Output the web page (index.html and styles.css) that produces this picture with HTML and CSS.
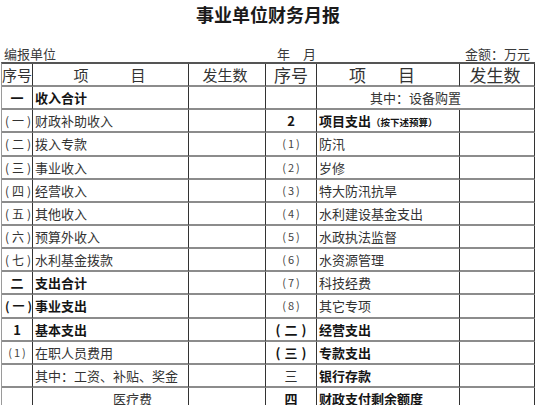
FILE: index.html
```html
<!DOCTYPE html>
<html lang="zh-CN">
<head>
<meta charset="utf-8">
<title>事业单位财务月报</title>
<link rel="stylesheet" href="styles.css">
</head>
<body>
<h1 class="title">事业单位财务月报</h1>
<div class="info">
  <span class="unit">编报单位</span>
  <span class="date">年　月</span>
  <span class="money">金额：万元</span>
</div>
<div class="sheet">
  <div class="c hd seq-l">序号</div>
  <div class="c hd item-h"><span>项</span><span>目</span></div>
  <div class="c hd amt-h">发生数</div>
  <div class="c hd hd-r seq-h">序号</div>
  <div class="c hd hd-r item-h item-hr"><span>项</span><span>目</span></div>
  <div class="c hd hd-r amt-h">发生数</div>

  <div class="c seq b">一</div>
  <div class="c item b">收入合计</div>
  <div class="c"></div>
  <div class="c seq"></div>
  <div class="c item span2 sub-r">其中：设备购置</div>

  <div class="c seq pl">(一)</div>
  <div class="c item">财政补助收入</div>
  <div class="c"></div>
  <div class="c seq b">2</div>
  <div class="c item b">项目支出<span class="note">（按下述预算）</span></div>
  <div class="c"></div>

  <div class="c seq pl">(二)</div>
  <div class="c item">拨入专款</div>
  <div class="c"></div>
  <div class="c seq num">(1)</div>
  <div class="c item">防汛</div>
  <div class="c"></div>

  <div class="c seq pl">(三)</div>
  <div class="c item">事业收入</div>
  <div class="c"></div>
  <div class="c seq num">(2)</div>
  <div class="c item">岁修</div>
  <div class="c"></div>

  <div class="c seq pl">(四)</div>
  <div class="c item">经营收入</div>
  <div class="c"></div>
  <div class="c seq num">(3)</div>
  <div class="c item">特大防汛抗旱</div>
  <div class="c"></div>

  <div class="c seq pl">(五)</div>
  <div class="c item">其他收入</div>
  <div class="c"></div>
  <div class="c seq num">(4)</div>
  <div class="c item">水利建设基金支出</div>
  <div class="c"></div>

  <div class="c seq pl">(六)</div>
  <div class="c item">预算外收入</div>
  <div class="c"></div>
  <div class="c seq num">(5)</div>
  <div class="c item">水政执法监督</div>
  <div class="c"></div>

  <div class="c seq pl">(七)</div>
  <div class="c item">水利基金拨款</div>
  <div class="c"></div>
  <div class="c seq num">(6)</div>
  <div class="c item">水资源管理</div>
  <div class="c"></div>

  <div class="c seq b">二</div>
  <div class="c item b">支出合计</div>
  <div class="c"></div>
  <div class="c seq num">(7)</div>
  <div class="c item">科技经费</div>
  <div class="c"></div>

  <div class="c seq pl b">(一)</div>
  <div class="c item b">事业支出</div>
  <div class="c"></div>
  <div class="c seq num">(8)</div>
  <div class="c item">其它专项</div>
  <div class="c"></div>

  <div class="c seq b">1</div>
  <div class="c item b">基本支出</div>
  <div class="c"></div>
  <div class="c seq pr b">(二)</div>
  <div class="c item b">经营支出</div>
  <div class="c"></div>

  <div class="c seq num-l">(1)</div>
  <div class="c item">在职人员费用</div>
  <div class="c"></div>
  <div class="c seq pr b">(三)</div>
  <div class="c item b">专款支出</div>
  <div class="c"></div>

  <div class="c seq"></div>
  <div class="c item">其中：工资、补贴、奖金</div>
  <div class="c"></div>
  <div class="c seq">三</div>
  <div class="c item b">银行存款</div>
  <div class="c"></div>

  <div class="c seq"></div>
  <div class="c item sub-l">医疗费</div>
  <div class="c"></div>
  <div class="c seq b">四</div>
  <div class="c item b">财政支付剩余额度</div>
  <div class="c"></div>
</div>
</body>
</html>
```
FILE: styles.css
```css
html, body {
  margin: 0;
  padding: 0;
  background: #ffffff;
}
body {
  font-family: "Noto Sans CJK SC", "Noto Sans", sans-serif;
  color: #333333;
  overflow: hidden;
  height: 405px;
}
.title {
  margin: 0;
  padding-top: 5px;
  font-size: 18px;
  line-height: 18px;
  font-weight: bold;
  text-align: center;
  color: #1a1a1a;
}
.info {
  display: grid;
  grid-template-columns: 273px 1fr auto;
  margin-top: 24px;
  margin-bottom: 2px;
  padding: 0 6px 0 4px;
  font-size: 13px;
  line-height: 13px;
  color: #3a3a3a;
}
.sheet {
  display: grid;
  grid-template-columns: 31px 156px 77px 51px 143px 75px;
  grid-auto-rows: 23.15px;
  width: 534px;
  margin-left: 1px;
  border-top: 2px solid #555555;
  border-left: 1px solid #9a9a9a;
  box-sizing: border-box;
}
.c {
  box-sizing: border-box;
  border-right: 1px solid #333333;
  border-bottom: 2px solid #8c8c8c;
  font-size: 13px;
  line-height: 21px;
  white-space: nowrap;
  overflow: visible;
}
.hd {
  font-size: 15px;
  color: #333333;
  text-align: center;
}
.hd-r {
  font-size: 17px;
}
.item-h {
  display: flex;
  justify-content: center;
  gap: 42px;
  padding-right: 2px;
}
.item-hr {
  gap: 32px;
  padding-right: 12px;
}
.amt-h {
  padding-right: 4px;
}
.seq {
  text-align: center;
}
.item {
  padding-left: 2px;
}
.b {
  font-weight: bold;
  color: #151515;
}
.pl {
  font-size: 12px;
  letter-spacing: 3px;
  text-indent: 3px;
}
.pr {
  font-size: 13px;
  letter-spacing: 4px;
  text-indent: 4px;
}
.num {
  font-size: 11px;
  letter-spacing: 2px;
  text-indent: 2px;
  color: #444444;
}
.num-l {
  font-size: 11px;
  letter-spacing: 2px;
  color: #444444;
  text-indent: 2px;
}
.span2 {
  grid-column: span 2;
}
.sub-r {
  padding-left: 53px;
}
.sub-l {
  padding-left: 80px;
}
.note {
  font-size: 9.5px;
}
```
